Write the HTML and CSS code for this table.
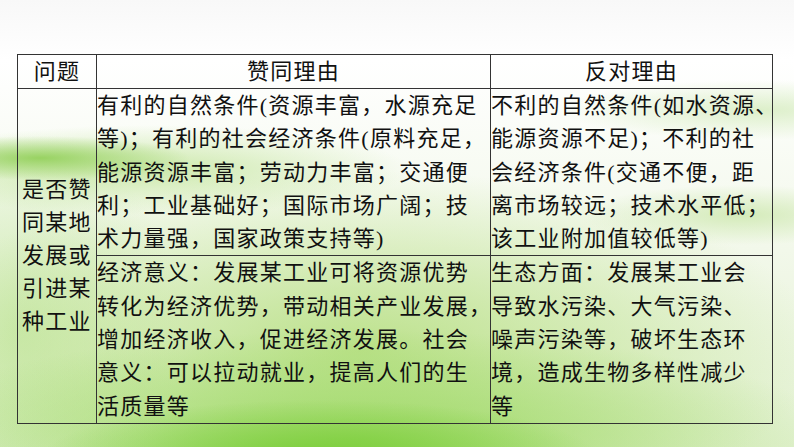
FILE: index.html
```html
<!DOCTYPE html>
<html lang="zh-CN">
<head>
<meta charset="utf-8">
<title>是否赞同某地发展或引进某种工业</title>
<link rel="stylesheet" href="styles.css">
</head>
<body>
<div class="bg"></div>
<main class="page">
  <table class="grid">
    <colgroup>
      <col class="c1">
      <col class="c2">
      <col class="c3">
    </colgroup>
    <thead>
      <tr class="head">
        <th>问题</th>
        <th>赞同理由</th>
        <th>反对理由</th>
      </tr>
    </thead>
    <tbody>
      <tr class="row">
        <td class="issue" rowspan="2">是否赞<br>同某地<br>发展或<br>引进某<br>种工业</td>
        <td class="txt">有利的自然条件(资源丰富，水源充足<br>等)；有利的社会经济条件(原料充足，<br>能源资源丰富；劳动力丰富；交通便<br>利；工业基础好；国际市场广阔；技<br>术力量强，国家政策支持等)</td>
        <td class="txt">不利的自然条件(如水资源、<br>能源资源不足)；不利的社<br>会经济条件(交通不便，距<br>离市场较远；技术水平低；<br>该工业附加值较低等)</td>
      </tr>
      <tr class="row">
        <td class="txt">经济意义：发展某工业可将资源优势<br>转化为经济优势，带动相关产业发展，<br>增加经济收入，促进经济发展。社会<br>意义：可以拉动就业，提高人们的生<br>活质量等</td>
        <td class="txt">生态方面：发展某工业会<br>导致水污染、大气污染、<br>噪声污染等，破坏生态环<br>境，造成生物多样性减少<br>等</td>
      </tr>
    </tbody>
  </table>
</main>
</body>
</html>
```
FILE: styles.css
```css
html, body {
  margin: 0;
  padding: 0;
  width: 794px;
  height: 447px;
  overflow: hidden;
}

body {
  position: relative;
  background: #ffffff;
  font-family: "Liberation Serif", "Noto Sans CJK SC", serif;
  color: #111111;
}

.bg {
  position: absolute;
  inset: 0;
  z-index: 0;
  background:
    radial-gradient(ellipse 280px 60px at 320px 460px, rgba(120, 205, 55, 1), rgba(120, 205, 55, 0) 100%),
    radial-gradient(ellipse 480px 110px at 360px 440px, rgba(150, 215, 90, 0.85), rgba(150, 215, 90, 0) 100%),
    radial-gradient(ellipse 150px 22px at 40px 158px, rgba(140, 205, 80, 0.85), rgba(140, 205, 80, 0) 100%),
    radial-gradient(ellipse 260px 45px at 150px 170px, rgba(185, 225, 140, 0.7), rgba(185, 225, 140, 0) 100%),
    radial-gradient(ellipse 200px 30px at 760px 110px, rgba(200, 230, 170, 0.6), rgba(200, 230, 170, 0) 100%),
    radial-gradient(ellipse 160px 30px at 740px 215px, rgba(190, 225, 150, 0.6), rgba(190, 225, 150, 0) 100%),
    radial-gradient(ellipse 460px 180px at 360px 350px, rgba(180, 222, 125, 0.85), rgba(180, 222, 125, 0) 100%),
    radial-gradient(ellipse 160px 200px at 20px 330px, rgba(195, 230, 160, 0.75), rgba(195, 230, 160, 0) 100%),
    linear-gradient(180deg, #f8f8f8 0px, #ffffff 60px, #f2f8ea 250px, #e2f1d0 447px);
}

.page {
  position: relative;
  z-index: 1;
  padding: 54px 0 0 17px;
}

.grid {
  border-collapse: collapse;
  table-layout: fixed;
  width: 755px;
  font-size: 22px;
  letter-spacing: 1.25px;
}

.c1 { width: 79px; }
.c2 { width: 394px; }
.c3 { width: 282px; }

.grid th,
.grid td {
  border: 1px solid #333333;
  padding: 0;
  font-weight: 400;
  white-space: nowrap;
}

.head th {
  height: 33px;
  line-height: 33px;
  text-align: center;
}

.row td {
  height: 166px;
}

.txt {
  line-height: 33.3px;
  padding: 1px 0 0 3px;
  vertical-align: top;
  text-align: left;
}

.issue {
  line-height: 33px;
  text-align: center;
  vertical-align: middle;
  padding: 6px 0 0 1px;
}
```
